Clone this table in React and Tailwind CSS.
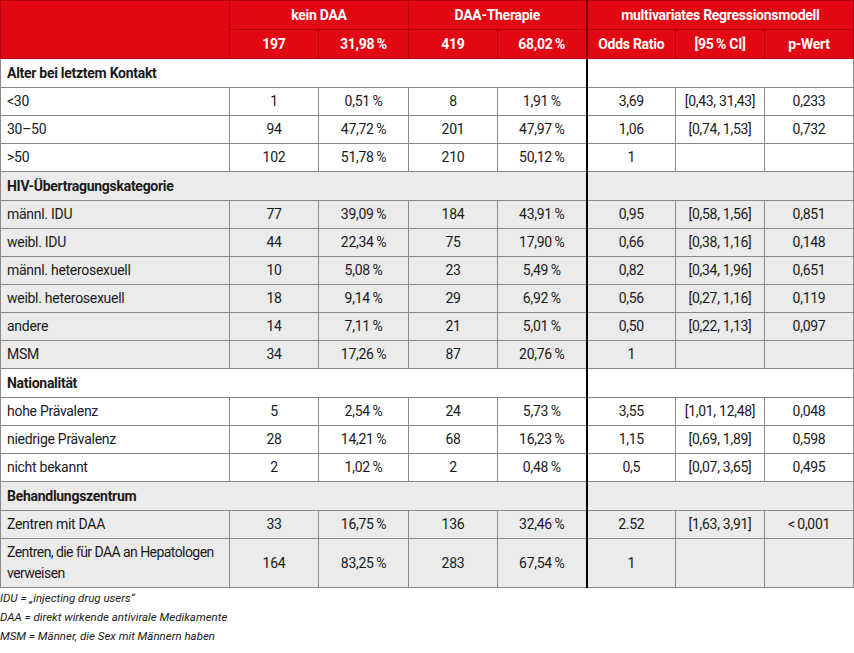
import React from "react";

const groups = [
  {
    title: "Alter bei letztem Kontakt",
    bg: "bg-white",
    rows: [
      ["<30", "1", "0,51%", "8", "1,91%", "3,69", "[0,43, 31,43]", "0,233"],
      ["30–50", "94", "47,72%", "201", "47,97%", "1,06", "[0,74, 1,53]", "0,732"],
      [">50", "102", "51,78%", "210", "50,12%", "1", "", ""],
    ],
  },
  {
    title: "HIV-Übertragungskategorie",
    bg: "bg-[#ebebeb]",
    rows: [
      ["männl. IDU", "77", "39,09%", "184", "43,91%", "0,95", "[0,58, 1,56]", "0,851"],
      ["weibl. IDU", "44", "22,34%", "75", "17,90%", "0,66", "[0,38, 1,16]", "0,148"],
      ["männl. heterosexuell", "10", "5,08%", "23", "5,49%", "0,82", "[0,34, 1,96]", "0,651"],
      ["weibl. heterosexuell", "18", "9,14%", "29", "6,92%", "0,56", "[0,27, 1,16]", "0,119"],
      ["andere", "14", "7,11%", "21", "5,01%", "0,50", "[0,22, 1,13]", "0,097"],
      ["MSM", "34", "17,26%", "87", "20,76%", "1", "", ""],
    ],
  },
  {
    title: "Nationalität",
    bg: "bg-white",
    rows: [
      ["hohe Prävalenz", "5", "2,54%", "24", "5,73%", "3,55", "[1,01, 12,48]", "0,048"],
      ["niedrige Prävalenz", "28", "14,21%", "68", "16,23%", "1,15", "[0,69, 1,89]", "0,598"],
      ["nicht bekannt", "2", "1,02%", "2", "0,48%", "0,5", "[0,07, 3,65]", "0,495"],
    ],
  },
  {
    title: "Behandlungszentrum",
    bg: "bg-[#ebebeb]",
    rows: [
      ["Zentren mit DAA", "33", "16,75%", "136", "32,46%", "2.52", "[1,63, 3,91]", "<0,001"],
      ["Zentren, die für DAA an Hepatologen verweisen", "164", "83,25%", "283", "67,54%", "1", "", ""],
    ],
  },
];

function fmt(s) {
  return s.replace("%", "\u2009%").replace("<", "<\u2009");
}

const cellB = "border border-[#8a8a8a]";

export default function App() {
  return (
    <div className="w-[854px] h-[653px] bg-white font-['Roboto',sans-serif] text-[#1a1a1a] overflow-hidden">
      <table className="table-fixed border-collapse w-[853px] text-[14px] tracking-[-0.02em]">
        <colgroup>
          <col className="w-[229px]" />
          <col className="w-[89px]" />
          <col className="w-[90px]" />
          <col className="w-[89px]" />
          <col className="w-[89px]" />
          <col className="w-[89px]" />
          <col className="w-[89px]" />
          <col className="w-[89px]" />
        </colgroup>
        <thead className="bg-[#e30613] text-white font-bold">
          <tr className="h-[29px]">
            <th rowSpan={2} className="border border-[#b3000c]"></th>
            <th colSpan={2} className="border border-[#b3000c] font-bold">kein DAA</th>
            <th colSpan={2} className="border border-[#b3000c] border-r-2 border-r-[#7a0008] font-bold">DAA-Therapie</th>
            <th colSpan={3} className="border border-[#b3000c] font-bold">multivariates Regressionsmodell</th>
          </tr>
          <tr className="h-[29px]">
            <th className="border border-[#b3000c] font-bold">197</th>
            <th className="border border-[#b3000c] font-bold">31,98{"\u2009"}%</th>
            <th className="border border-[#b3000c] font-bold">419</th>
            <th className="border border-[#b3000c] border-r-2 border-r-[#7a0008] font-bold">68,02{"\u2009"}%</th>
            <th className="border border-[#b3000c] font-bold">Odds Ratio</th>
            <th className="border border-[#b3000c] font-bold">[95{"\u2009"}% CI]</th>
            <th className="border border-[#b3000c] font-bold">p-Wert</th>
          </tr>
        </thead>
        <tbody>
          {groups.map((g) => (
            <React.Fragment key={g.title}>
              <tr className={`h-[29px] ${g.bg}`}>
                <td colSpan={5} className={`${cellB} border-r-2 border-r-black px-[6px] font-bold`}>
                  {g.title}
                </td>
                <td colSpan={3} className={cellB}></td>
              </tr>
              {g.rows.map((r) => {
                const tall = r[0].length > 30;
                return (
                  <tr key={r[0]} className={`${tall ? "h-[49px]" : "h-[28px]"} ${g.bg}`}>
                    <td className={`${cellB} px-[6px] leading-[21px] ${tall ? "whitespace-nowrap tracking-[-0.04em]" : ""}`}>
                      {tall ? (
                        <>
                          Zentren, die für DAA an Hepatologen
                          <br />
                          verweisen
                        </>
                      ) : (
                        r[0]
                      )}
                    </td>
                    {r.slice(1).map((v, i) => (
                      <td
                        key={i}
                        className={`${cellB} text-center ${i === 3 ? "border-r-2 border-r-black" : ""}`}
                      >
                        {fmt(v)}
                      </td>
                    ))}
                  </tr>
                );
              })}
            </React.Fragment>
          ))}
        </tbody>
      </table>
      <div className="mt-[1px] text-[11.5px] italic leading-[19px] text-[#1a1a1a]">
        <div>IDU = „injecting drug users“</div>
        <div>DAA = direkt wirkende antivirale Medikamente</div>
        <div>MSM = Männer, die Sex mit Männern haben</div>
      </div>
    </div>
  );
}
